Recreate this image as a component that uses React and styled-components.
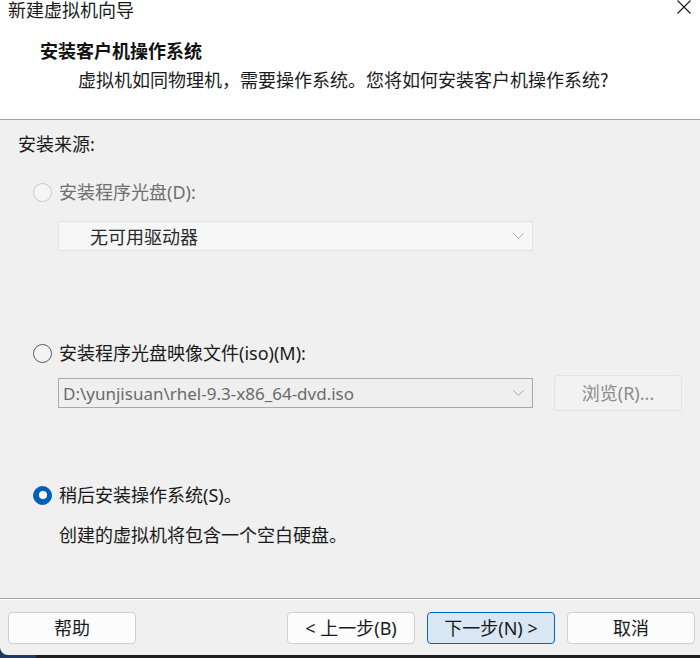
import React from "react";
import styled, { createGlobalStyle } from "styled-components";

const Global = createGlobalStyle`
  html, body { margin: 0; padding: 0; background: #1c1c1c; }
  body { width: 700px; height: 658px; overflow: hidden; }
  * { box-sizing: border-box; }
`;

const FONT = `"Noto Sans", "Noto Sans CJK SC", sans-serif`;
const CJK = `"Noto Sans CJK SC", "Noto Sans", sans-serif`;

const Screen = styled.div`
  width: 700px;
  height: 658px;
  display: flex;
  flex-direction: column;
  background: linear-gradient(90deg, #1d3a66 0, #1d3a66 36px, #1e1e1e 36px);
  font-family: ${FONT};
`;

const Window = styled.div`
  height: 655px;
  display: flex;
  flex-direction: column;
  background: #f0f0f0;
  border-bottom-left-radius: 8px;
  overflow: hidden;
`;

const Header = styled.header`
  height: 120px;
  flex: none;
  background: #ffffff;
  border-bottom: 1px solid #a0a0a0;
  display: flex;
  flex-direction: column;
`;

const TitleBar = styled.div`
  height: 18px;
  padding: 0 9px 0 8px;
  display: flex;
  align-items: center;
  justify-content: space-between;
`;

const TitleText = styled.span`
  font-family: ${CJK};
  font-size: 18px;
  line-height: 18px;
  color: #1a1a1a;
`;

const CloseBtn = styled.span`
  display: flex;
  align-self: flex-start;
`;

const HeaderTitle = styled.div`
  margin: 20px 0 0 40px;
  font-family: ${CJK};
  font-size: 18px;
  font-weight: 700;
  line-height: 24px;
  color: #111;
`;

const HeaderSub = styled.div`
  margin: 5px 0 0 78px;
  font-family: ${CJK};
  font-size: 18px;
  line-height: 24px;
  color: #1a1a1a;
`;

const Body = styled.main`
  flex: 1;
  display: flex;
  flex-direction: column;
  padding: 12px 0 0 18px;
`;

const Label = styled.div`
  font-size: 18px;
  line-height: 24px;
  color: ${(p) => (p.$disabled ? "#6f6f6f" : "#1a1a1a")};
  margin-top: ${(p) => p.$mt || 0}px;
  margin-left: ${(p) => p.$ml || 0}px;
`;

const RadioRow = styled.label`
  display: flex;
  align-items: center;
  gap: 7px;
  margin-top: ${(p) => p.$mt || 0}px;
  margin-left: 15px;
  height: 24px;
`;

const RadioDot = styled.span`
  width: 19px;
  height: 19px;
  border-radius: 50%;
  flex: none;
  position: relative;
  background: ${(p) => (p.$checked ? "#005fb8" : p.$disabled ? "#f5f5f5" : "#f3f3f3")};
  border: 1px solid
    ${(p) => (p.$checked ? "#005fb8" : p.$disabled ? "#c8c8c8" : "#5c5c5c")};
  &::after {
    content: "";
    display: ${(p) => (p.$checked ? "block" : "none")};
    position: absolute;
    left: 50%;
    top: 50%;
    width: 8px;
    height: 8px;
    margin: -4px 0 0 -4px;
    border-radius: 50%;
    background: #ffffff;
  }
`;

const FieldRow = styled.div`
  display: flex;
  align-items: center;
  gap: 21px;
  margin-top: ${(p) => p.$mt || 0}px;
  margin-left: 40px;
  height: ${(p) => p.$h || 30}px;
`;

const Combo = styled.div`
  width: 475px;
  height: 30px;
  display: flex;
  align-items: center;
  justify-content: space-between;
  padding: 0 8px 0 ${(p) => p.$pl || 4}px;
  border: 1px solid ${(p) => (p.$light ? "#e3e3e3" : "#aaaaaa")};
  background: ${(p) => (p.$light ? "#f6f6f6" : "#efefef")};
  font-size: ${(p) => (p.$latin ? 17 : 18)}px;
  color: ${(p) => (p.$latin ? "#6a6a6a" : "#2a2a2a")};
  white-space: nowrap;
`;

const Button = styled.button`
  width: 128px;
  height: 32px;
  border-radius: 4px;
  border: 1px solid ${(p) => (p.$primary ? "#0067c0" : p.$disabled ? "#e2e2e2" : "#cfcfcf")};
  background: ${(p) => (p.$primary ? "#d9e6f3" : p.$disabled ? "#f2f2f2" : "#fcfcfc")};
  color: ${(p) => (p.$disabled ? "#8c8c8c" : "#1a1a1a")};
  font-family: ${FONT};
  font-size: 18px;
  line-height: 24px;
  padding: 0;
  display: flex;
  align-items: center;
  justify-content: center;
  gap: ${(p) => p.$gap || 0}px;
`;

const BrowseButton = styled(Button)`
  height: 36px;
`;

const Footer = styled.footer`
  height: 57px;
  flex: none;
  border-top: 1px solid #a0a0a0;
  box-shadow: inset 0 1px 0 #ffffff;
  display: flex;
  align-items: flex-start;
  padding: 13px 5px 0 8px;
`;

const Spacer = styled.div`
  flex: 1;
`;

const NavGroup = styled.div`
  display: flex;
  gap: 12px;
`;

const Chevron = () => (
  <svg width="11" height="6" viewBox="0 0 11 6">
    <path d="M0.5 0.5 L5.5 5.5 L10.5 0.5" fill="none" stroke="#a6a6a6" strokeWidth="1" />
  </svg>
);

export default function App() {
  return (
    <Screen>
      <Global />
      <Window>
        <Header>
          <TitleBar>
            <TitleText>新建虚拟机向导</TitleText>
            <CloseBtn>
              <svg width="14" height="14" viewBox="0 0 14 14">
                <path d="M0.5 0.5 L13.5 13.5 M13.5 0.5 L0.5 13.5" stroke="#1a1a1a" strokeWidth="1.1" />
              </svg>
            </CloseBtn>
          </TitleBar>
          <HeaderTitle>安装客户机操作系统</HeaderTitle>
          <HeaderSub>虚拟机如同物理机，需要操作系统。您将如何安装客户机操作系统?</HeaderSub>
        </Header>
        <Body>
          <Label>安装来源:</Label>
          <RadioRow $mt={24}>
            <RadioDot $disabled />
            <Label $disabled>安装程序光盘(D):</Label>
          </RadioRow>
          <FieldRow $mt={17}>
            <Combo $light $pl={31}>
              <span>无可用驱动器</span>
              <Chevron />
            </Combo>
          </FieldRow>
          <RadioRow $mt={90}>
            <RadioDot />
            <Label>安装程序光盘映像文件(iso)(M):</Label>
          </RadioRow>
          <FieldRow $mt={10} $h={36}>
            <Combo $latin>
              <span>D:\yunjisuan\rhel-9.3-x86_64-dvd.iso</span>
              <Chevron />
            </Combo>
            <BrowseButton $disabled>浏览(R)...</BrowseButton>
          </FieldRow>
          <RadioRow $mt={72}>
            <RadioDot $checked />
            <Label>稍后安装操作系统(S)。</Label>
          </RadioRow>
          <Label $mt={16} $ml={41}>创建的虚拟机将包含一个空白硬盘。</Label>
        </Body>
        <Footer>
          <Button>帮助</Button>
          <Spacer />
          <NavGroup>
            <Button $gap={6}>&lt; 上一步(B)</Button>
            <Button $primary>下一步(N) &gt;</Button>
            <Button>取消</Button>
          </NavGroup>
        </Footer>
      </Window>
    </Screen>
  );
}
